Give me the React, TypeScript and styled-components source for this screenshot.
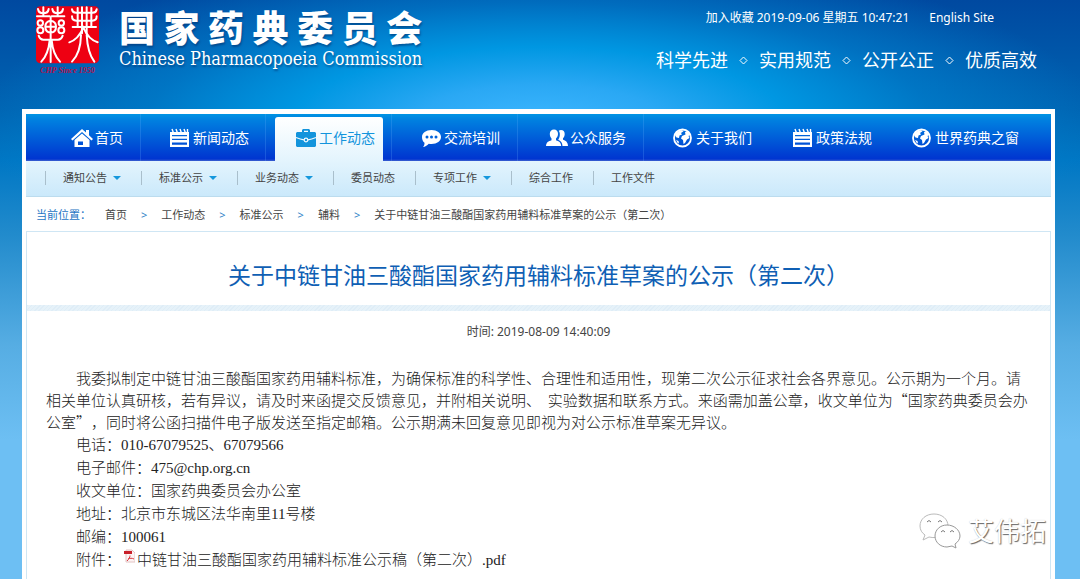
import React from "react";
import styled, { createGlobalStyle } from "styled-components";

const cjk = '"Noto Sans", "Noto Sans CJK SC", sans-serif';

const GlobalStyle = createGlobalStyle`
  * { box-sizing: border-box; }
  body {
    margin: 0;
    font-family: ${cjk};
    font-size: 11px;
    color: #444;
    background: #6dbff3;
    text-spacing-trim: space-all;
  }
  a { color: inherit; text-decoration: none; }
  ul, ol, dl, dd, p, h1 { margin: 0; padding: 0; list-style: none; }
`;

const Page = styled.div`
  min-height: 100vh;
  display: flex;
  flex-direction: column;
  background:
    radial-gradient(ellipse 560px 170px at 50% 122px, #3db6ff 0%, #2aa8f4 22%, #0097e2 44%, rgba(0, 132, 210, 0.6) 70%, rgba(0, 110, 192, 0) 100%) 0 0 / 100% 300px no-repeat,
    linear-gradient(#0049a0 0, #0064b2 109px, #0077c4 160px, #228bcc 235px, #56ade3 345px, #6dbff3 440px);
`;

const Header = styled.header`
  height: 109px;
  display: flex;
  justify-content: space-between;
  padding: 6px 43px 0 36px;
  color: #fff;
`;

const Brand = styled.a`
  display: flex;
  gap: 20px;
`;

const Seal = styled.div`
  width: 63px;
  display: flex;
  flex-direction: column;
  align-items: center;
`;

const SealCaption = styled.span`
  color: #b3124a;
  font: italic bold 8px/14px "Liberation Serif", serif;
  white-space: nowrap;
`;

const BrandText = styled.div`
  display: flex;
  flex-direction: column;
  text-shadow: 1px 2px 2px rgba(0, 50, 110, 0.55);
`;

const BrandName = styled.span`
  display: flex;
  justify-content: space-between;
  font-family: "Noto Sans CJK SC", sans-serif;
  font-size: 36px;
  font-weight: 900;
  line-height: 40px;
`;

const BrandLatin = styled.span`
  font: 18px/26px "DejaVu Serif Condensed", "DejaVu Serif", serif;
  white-space: nowrap;
`;

const HeaderSide = styled.div`
  display: flex;
  flex-direction: column;
  align-items: flex-end;
  gap: 18px;
`;

const Utility = styled.div`
  display: flex;
  gap: 20px;
  margin-right: 43px;
  font-size: 12px;
  line-height: 24px;
`;

const Slogan = styled.p`
  display: flex;
  align-items: center;
  gap: 11px;
  font-size: 18px;
  line-height: 24px;
`;

const Diamond = styled.svg`
  width: 9px;
  height: 9px;
`;

const Shell = styled.div`
  flex: 1;
  display: flex;
  flex-direction: column;
  margin: 0 25px 0 22px;
  padding: 5px 4px 0;
  background: #fff;
`;

const MainNav = styled.ul`
  display: grid;
  grid-template-columns: 115fr 125fr 126fr 126fr 126fr 120fr 119fr 168fr;
  height: 47px;
  background: linear-gradient(#0094e4 0, #0080e0 6px, #0035d0 45px, #3f62cf 47px);
`;

const NavItem = styled.li<{ $active?: boolean; $divided?: boolean }>`
  display: flex;
  padding: ${(p) => (p.$active ? "3px 8px 0 9px" : "0")};
  border-right: 1px solid ${(p) => (p.$divided ? "rgba(110, 180, 255, 0.22)" : "transparent")};
`;

const NavLink = styled.a<{ $active?: boolean; $first?: boolean }>`
  flex: 1;
  display: flex;
  align-items: center;
  gap: 2px;
  padding-left: ${(p) => (p.$first ? "45px" : p.$active ? "20px" : "28px")};
  padding-bottom: ${(p) => (p.$active ? "2px" : "0")};
  border-radius: 3px 3px 0 0;
  background: ${(p) => (p.$active ? "linear-gradient(#fff, #e3f4fd)" : "none")};
  color: ${(p) => (p.$active ? "#1394dc" : "#fff")};
  font-size: 14px;
  line-height: 20px;
  white-space: nowrap;
`;

const NavIcon = styled.svg`
  width: 22px;
  height: 20px;
  flex: none;
`;

const SubNav = styled.ul`
  display: flex;
  align-items: center;
  height: 36px;
  padding: 0 0 2px 19px;
  background: linear-gradient(#e3f4fd, #cbe9fb);
  border-bottom: 1px solid #bcdcee;
`;

const SubItem = styled.li`
  border-left: 1px solid #a9bfcc;
  padding: 0 20px 0 17px;
  line-height: 14px;
`;

const SubLink = styled.a`
  display: flex;
  align-items: center;
  gap: 6px;
`;

const Caret = styled.i`
  border: 4px solid transparent;
  border-top-color: #1698dc;
  border-bottom: 0;
`;

const Crumbs = styled.nav`
  display: flex;
  align-items: center;
  gap: 14px;
  padding: 10px 10px 8px;
  line-height: 16px;
`;

const CrumbLabel = styled.span`
  color: #1d74c4;
`;

const CrumbList = styled.ol`
  display: flex;
  gap: 14px;
`;

const Crumb = styled.li`
  display: flex;
  gap: 14px;
  & + &::before {
    content: ">";
    color: #2f83c8;
  }
`;

const Article = styled.article`
  flex: 1;
  border: 1px solid #cfe6f4;
  border-bottom: 0;
`;

const Title = styled.h1`
  padding: 27px 0 14px;
  font-size: 23px;
  font-weight: 400;
  line-height: 32px;
  text-align: center;
  color: #0f5fb4;
`;

const Band = styled.div`
  height: 6px;
  background: repeating-linear-gradient(135deg, #dfedf7 0 1px, #e6f2f9 1px 3px);
`;

const Stamp = styled.p`
  padding: 13px 0 0;
  text-align: center;
  font-size: 12px;
  line-height: 16px;
`;

const Body = styled.div`
  padding: 27px 20px 8px 19px;
  font-family: "Noto Sans CJK SC", sans-serif;
  font-size: 15px;
  font-weight: 300;
  color: #222;
`;

const Paragraph = styled.p`
  text-indent: 2em;
  line-height: 22px;
`;

const Facts = styled.dl`
  padding: 1px 0 0 30px;
  line-height: 23px;
`;

const Fact = styled.div`
  display: flex;
  font-family: "Liberation Serif", "Noto Sans CJK SC", serif;
`;

const FileLink = styled.a`
  display: flex;
  gap: 2px;
  padding-left: 2px;
`;

const FileIcon = styled.svg`
  width: 12px;
  height: 14px;
`;

const Watermark = styled.div`
  position: absolute;
  right: 34px;
  top: 512px;
  display: flex;
  align-items: center;
  gap: 7px;
  color: #fff;
  font-size: 26px;
  line-height: 38px;
  text-shadow: 1px 1px 1px #666, 0 0 1px #ccc;
`;

type IconName = "home" | "notes" | "case" | "chat" | "people" | "globe";

const Icon = ({ name }: { name: IconName }) => (
  <NavIcon viewBox="0 0 22 20" fill="currentColor" aria-hidden="true">
    {name === "home" && (
      <>
        <path d="M11 1 0 11l1.500 1.500L11 4l9.500 8.500L22 11l-4-3.700V2h-3v2.600z" />
        <path fillRule="evenodd" d="M11 5.500 3.500 12v7h15v-7zM7 13.500h5V17H7z" />
      </>
    )}
    {name === "notes" && (
      <>
        <path fillRule="evenodd" d="M1 4h19v15H1zM3 7v1.300h15V7zM3 10.700V12h15v-1.300zM3 14.400v2.300h15v-2.300z" />
        <path d="m3 1 1.500 4M7 1l1.500 4M11 1l1.500 4M15 1l1.500 4M18.500 1v4" stroke="currentColor" strokeWidth="1.400" />
      </>
    )}
    {name === "case" && (
      <>
        <path fillRule="evenodd" d="M7 4V2l1-1h6l1 1v2h5l1 1v13l-1 1H2l-1-1V5l1-1zm2 0h4V2.700H9z" />
        <path d="M1 9.500q4.500 2 8 2.300M21 9.500q-4.500 2-8 2.300" fill="none" stroke="#f2fafe" strokeWidth="1.200" />
        <circle cx="11" cy="12" r="1.800" fill="none" stroke="#f2fafe" strokeWidth="1.200" />
      </>
    )}
    {name === "chat" && (
      <>
        <path d="M11.500 2C17 2 21 5 21 9s-4 7-9.500 7c-1 0-2 0-2.700-.3C7 17.500 5 19 3 19c1-1 1.600-2.500 1.500-4.300C2.800 13.500 2 11.500 2 9c0-4 4-7 9.500-7z" />
        <g fill="#0062da">
          <circle cx="7" cy="9" r="1.500" />
          <circle cx="11.500" cy="9" r="1.500" />
          <circle cx="16" cy="9" r="1.500" />
        </g>
      </>
    )}
    {name === "people" && (
      <>
        <path d="M8 1.500c2.500 0 4 1.700 4 4.300 0 2-.8 3.700-2 4.700v1.700c2.800 1 5 2 5.200 5.800H0c.2-3.800 2.500-4.800 5.500-5.800v-1.700c-1-1-1.700-2.700-1.700-4.700C3.800 3.200 5.500 1.500 8 1.500z" />
        <path d="M15 2c2.300 0 3.700 1.600 3.700 4 0 1.900-.7 3.300-1.700 4.200v1.600c2.500.9 4.800 2 5 6.200h-5.500c-.2-3.700-1.700-5.200-4.300-6.300 1.300-2 1.800-3.500 1.600-6.200-.1-1.300-.5-2.200-1-2.800.6-.4 1.300-.7 2.200-.7z" />
      </>
    )}
    {name === "globe" && (
      <>
        <circle cx="10.500" cy="10" r="8.500" fill="none" stroke="currentColor" strokeWidth="1.800" />
        <path d="M3 7c1.500-3 4-4.500 7-4.700l1.500 1L9 5l1 1.500-2.500 1L7 10l-2.500-.5z" />
        <path d="M10 8l3.500-1.500L13 4l2.500-.7L18 7l-1.500 1 1 2-2.500 1.500L13 15l-1.500 1-.5-4-2-1.500zM4 12l2.500 1 .5 2.500-1.500-.7z" />
      </>
    )}
  </NavIcon>
);

const SealMark = () => (
  <svg width="63" height="58" viewBox="35 20 189 172" aria-hidden="true">
    <rect x="35" y="20" width="189" height="171" rx="13" fill="#ee0012" />
    <g fill="none" stroke="#fff" strokeWidth="6" strokeLinecap="round">
      <path d="M41 28q2 13 16 13t16-13M57 23v27M84 28q2 13 16 13t16-13M100 23v27M38 50h38M82 50h38" />
      <path d="M79 53v10M79 63q16 2 16 18t-16 18q-16-2-16-18t16-18zM64 81h30M79 64v33" />
      <circle cx="48" cy="70" r="8" />
      <circle cx="48" cy="92" r="9" />
      <circle cx="111" cy="70" r="8" />
      <circle cx="111" cy="92" r="9" />
      <path d="M43 108q4 12 14 12h44q10 0 14-12M79 103v84M76 122q-4 42-25 64M82 122q4 42 25 64" />
      <path d="M143 29q1 10 12 10h50q11 0 12-10M143 50q0 13 13 13h48q13 0 13-13M145 82h70M160 25v57M173 23v78M187 23v78M201 25v57" />
      <path d="M135 128q26-8 42-44 16 36 43 44M170 106q-1 54-27 80M187 106q3 54 23 80" />
    </g>
  </svg>
);

const nav: { label: string; icon: IconName; active?: boolean; divided?: boolean }[] = [
  { label: "首页", icon: "home", divided: true },
  { label: "新闻动态", icon: "notes", divided: true },
  { label: "工作动态", icon: "case", active: true, divided: true },
  { label: "交流培训", icon: "chat", divided: true },
  { label: "公众服务", icon: "people", divided: true },
  { label: "关于我们", icon: "globe" },
  { label: "政策法规", icon: "notes" },
  { label: "世界药典之窗", icon: "globe" },
];

const subNav = [
  { label: "通知公告", menu: true },
  { label: "标准公示", menu: true },
  { label: "业务动态", menu: true },
  { label: "委员动态" },
  { label: "专项工作", menu: true },
  { label: "综合工作" },
  { label: "工作文件" },
];

const title = "关于中链甘油三酸酯国家药用辅料标准草案的公示（第二次）";
const notice =
  "我委拟制定中链甘油三酸酯国家药用辅料标准，为确保标准的科学性、合理性和适用性，现第二次公示征求社会各界意见。公示期为一个月。请相关单位认真研核，若有异议，请及时来函提交反馈意见，并附相关说明、\u00a0 实验数据和联系方式。来函需加盖公章，收文单位为“国家药典委员会办公室”，同时将公函扫描件电子版发送至指定邮箱。公示期满未回复意见即视为对公示标准草案无异议。";
const crumbs = ["首页", "工作动态", "标准公示", "辅料", title];
const slogans = ["科学先进", "实用规范", "公开公正", "优质高效"];
const facts = [
  ["电话：", "010-67079525、67079566"],
  ["电子邮件：", "475@chp.org.cn"],
  ["收文单位：", "国家药典委员会办公室"],
  ["地址：", "北京市东城区法华南里11号楼"],
  ["邮编：", "100061"],
];

export default function App() {
  return (
    <Page lang="zh-CN">
      <GlobalStyle />
      <Header>
        <Brand href="#">
          <Seal>
            <SealMark />
            <SealCaption>CHP Since 1950</SealCaption>
          </Seal>
          <BrandText>
            <BrandName>
              {[..."国家药典委员会"].map((c) => (
                <span key={c}>{c}</span>
              ))}
            </BrandName>
            <BrandLatin>Chinese Pharmacopoeia Commission</BrandLatin>
          </BrandText>
        </Brand>
        <HeaderSide>
          <Utility>
            <span>
              <a href="#">加入收藏</a> 2019-09-06 星期五 10:47:21
            </span>
            <a href="#">English Site</a>
          </Utility>
          <Slogan>
            {slogans.map((s, i) => (
              <React.Fragment key={s}>
                {i > 0 && (
                  <Diamond viewBox="0 0 9 9" aria-hidden="true">
                    <path d="M4.500 1 8 4.500 4.500 8 1 4.500z" fill="none" stroke="#fff" />
                  </Diamond>
                )}
                <span>{s}</span>
              </React.Fragment>
            ))}
          </Slogan>
        </HeaderSide>
      </Header>

      <Shell>
        <nav>
          <MainNav>
            {nav.map((n, i) => (
              <NavItem key={n.label} $active={n.active} $divided={n.divided}>
                <NavLink href="#" $active={n.active} $first={i === 0}>
                  <Icon name={n.icon} />
                  {n.label}
                </NavLink>
              </NavItem>
            ))}
          </MainNav>
          <SubNav>
            {subNav.map((s) => (
              <SubItem key={s.label}>
                <SubLink href="#">
                  {s.label}
                  {s.menu && <Caret />}
                </SubLink>
              </SubItem>
            ))}
          </SubNav>
        </nav>

        <Crumbs>
          <CrumbLabel>当前位置：</CrumbLabel>
          <CrumbList>
            {crumbs.map((c) => (
              <Crumb key={c}>
                <a href="#">{c}</a>
              </Crumb>
            ))}
          </CrumbList>
        </Crumbs>

        <Article>
          <Title>{title}</Title>
          <Band />
          <Stamp>时间: 2019-08-09 14:40:09</Stamp>
          <Body>
            <Paragraph>{notice}</Paragraph>
            <Facts>
              {facts.map(([k, v]) => (
                <Fact key={k}>
                  <dt>{k}</dt>
                  <dd>{v}</dd>
                </Fact>
              ))}
              <Fact>
                <dt>附件：</dt>
                <dd>
                  <FileLink href="#">
                    <FileIcon viewBox="0 0 12 14" aria-hidden="true">
                      <path d="M3 1h6l3 3v9H3z" fill="#fdf3f3" stroke="#e2c4c4" />
                      <path d="M1 2h8v3H1z" fill="#c8202a" />
                      <path d="M4 12c2-2 3-4 3-5.500M5 10c2-1 4-1 6 0" fill="none" stroke="#d8343c" />
                    </FileIcon>
                    中链甘油三酸酯国家药用辅料标准公示稿（第二次）.pdf
                  </FileLink>
                </dd>
              </Fact>
            </Facts>
          </Body>
        </Article>
      </Shell>

      <Watermark>
        <svg width="42" height="36" viewBox="0 0 42 36" fill="#fff" stroke="#999" aria-hidden="true">
          <path d="M15 1C7 1 1 6 1 13c0 4 2 7 5 9l-2 5 6-3c8 2 19-1 19-11C29 6 23 1 15 1z" stroke="#bbb" />
          <path d="M28 12c-7 0-12 5-12 11s5 11 12 11l5-1 4 2-1-4c3-2 5-5 5-8 0-6-6-11-13-11z" />
          <path d="M8 9q2-3 4 0M19 9q2-3 4 0M22 19q2-3 4 0M31 19q2-3 4 0" fill="none" stroke="#777" />
        </svg>
        <span>艾伟拓</span>
      </Watermark>
    </Page>
  );
}
